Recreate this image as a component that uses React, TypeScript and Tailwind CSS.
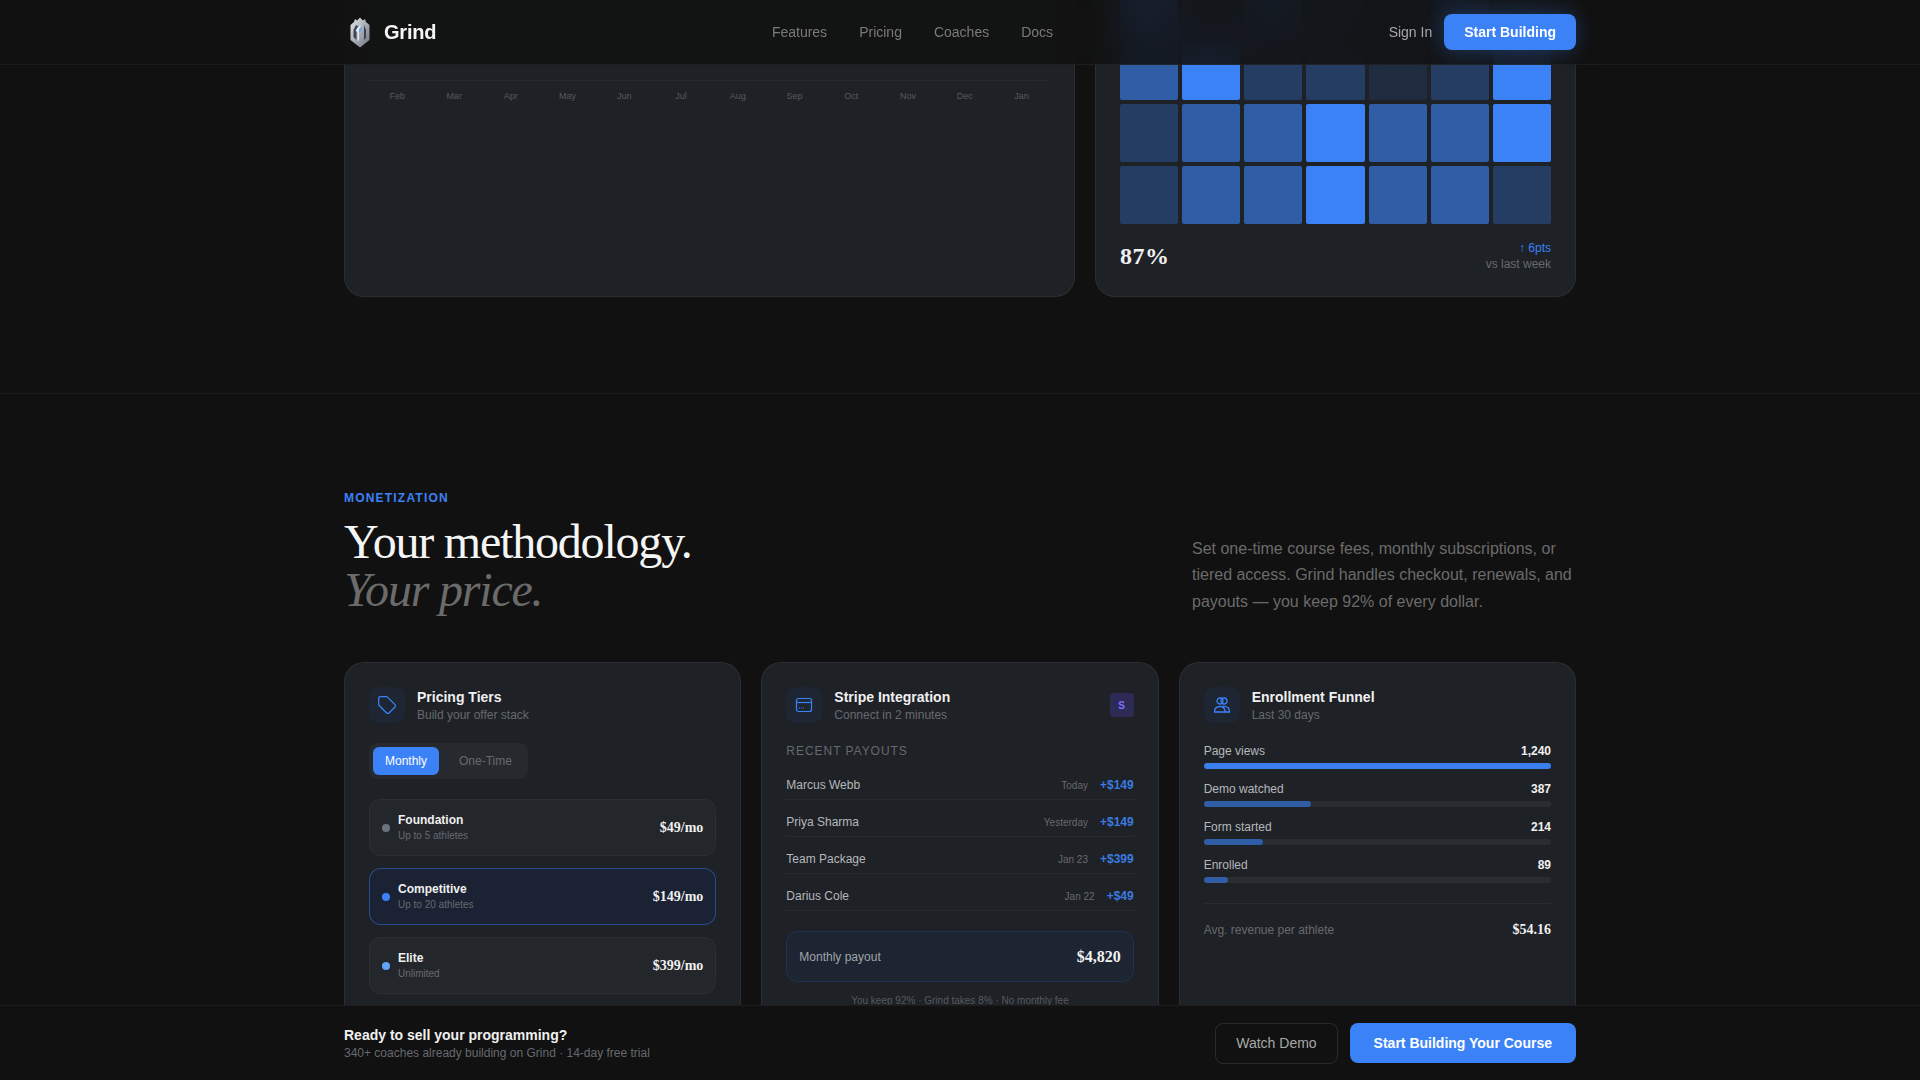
const sans = "font-['Liberation_Sans',Arial,sans-serif]";
const serif = "font-['Liberation_Serif','Times_New_Roman',serif]";

const months = ["Feb", "Mar", "Apr", "May", "Jun", "Jul", "Aug", "Sep", "Oct", "Nov", "Dec", "Jan"];

// 0 darkest .. 3 full blue
const heat = [
  [3, 1, 2, 1, 0, 2, 1],
  [2, 3, 1, 1, 0, 1, 3],
  [1, 2, 2, 3, 2, 2, 3],
  [1, 2, 2, 3, 2, 2, 1],
];
const heatColors = ["bg-[#1f2b3f]", "bg-[#263d63]", "bg-[#2f5da6]", "bg-[#3b82f6]"];

const payouts = [
  { name: "Marcus Webb", date: "Today", amount: "+$149" },
  { name: "Priya Sharma", date: "Yesterday", amount: "+$149" },
  { name: "Team Package", date: "Jan 23", amount: "+$399" },
  { name: "Darius Cole", date: "Jan 22", amount: "+$49" },
];

const funnel = [
  { label: "Page views", value: "1,240", pct: 100, color: "bg-[#3b7fee]" },
  { label: "Demo watched", value: "387", pct: 31, color: "bg-[#2f5da6]" },
  { label: "Form started", value: "214", pct: 17, color: "bg-[#2f5da6]" },
  { label: "Enrolled", value: "89", pct: 7, color: "bg-[#2f5da6]" },
];

function Logo() {
  return (
    <svg width="32" height="32" viewBox="0 0 32 32" fill="none">
      <defs>
        <linearGradient id="lg" x1="0" y1="0" x2="1" y2="1">
          <stop offset="0" stopColor="#e5e7eb" />
          <stop offset="1" stopColor="#6b7280" />
        </linearGradient>
      </defs>
      <path d="M16 1.5l3 3 2-1.5 1 3 3.5 3V24l-9.5 7.5L6.5 24V9l3.5-3 1-3 2 1.5z" fill="url(#lg)" />
      <path d="M12 9l-2.5 5v7l3 3v-8l2.5-5zM20 9l2 5v8l-2 2v-9z" fill="#3f4349" />
      <path d="M11.5 15c1-3 3-5 6-6-1.5 2-2.5 4-2.5 7v9l-1.5-1v-8z" fill="#dbeafe" />
      <path d="M15 14c.5-1.500 1.500-2.500 3-3-.8 1.200-1.300 2.600-1.300 4.500l-1.700.5z" fill="#60a5fa" />
    </svg>
  );
}

function IconBox({ children }: { children: React.ReactNode }) {
  return (
    <div className="flex h-9 w-9 shrink-0 items-center justify-center rounded-[10px] bg-[#1e2a3d]/60">
      {children}
    </div>
  );
}

function TagIcon() {
  return (
    <svg width="20" height="20" viewBox="0 0 24 24" fill="none" stroke="#3b82f6" strokeWidth="1.500">
      <path d="M12.586 2.586A2 2 0 0 0 11.172 2H4a2 2 0 0 0-2 2v7.172a2 2 0 0 0 .586 1.414l8.704 8.704a2.426 2.426 0 0 0 3.420 0l6.580-6.580a2.426 2.426 0 0 0 0-3.420z" />
    </svg>
  );
}

function CardIcon() {
  return (
    <svg width="18" height="18" viewBox="0 0 18 18" fill="none" stroke="#3b82f6" strokeWidth="1.200">
      <rect x="1.500" y="2.500" width="15" height="13" rx="2" />
      <path d="M1.500 6.500h15" />
      <path d="M4 12h2.500M8 12h1.500" strokeDasharray="1 .8" />
    </svg>
  );
}

function PeopleIcon() {
  return (
    <svg width="18" height="18" viewBox="0 0 18 18" fill="none" stroke="#3b82f6" strokeWidth="1.300">
      <circle cx="7" cy="5" r="3" />
      <circle cx="11" cy="5" r="3" />
      <path d="M1.500 16c0-3 1.500-5.500 5.500-5.500S12 13 12 16z" />
      <path d="M9.500 10.500c.5-.1 1-.1 1.500-.1 4 0 5.500 2.600 5.500 5.600H12" />
    </svg>
  );
}

function CardHead({ icon, title, sub, right }: { icon: React.ReactNode; title: string; sub: string; right?: React.ReactNode }) {
  return (
    <div className="flex items-center gap-3">
      <IconBox>{icon}</IconBox>
      <div className="min-w-0 flex-1">
        <p className="text-[14px] font-semibold leading-[20px] text-[#f0f0f0]">{title}</p>
        <p className="text-[12px] leading-[16px] text-[#666a70]">{sub}</p>
      </div>
      {right}
    </div>
  );
}

function Tier({ name, sub, price, dot, active }: { name: string; sub: string; price: string; dot: string; active?: boolean }) {
  return (
    <div
      className={`flex h-[57px] items-center gap-2 rounded-[12px] border px-3 ${
        active ? "border-[#3b82f6]/45 bg-[#1a2233]" : "border-white/[0.04] bg-[#23262b]"
      }`}
    >
      <span className={`h-2 w-2 rounded-full ${dot}`} />
      <div className="flex-1">
        <p className="text-[12px] font-semibold leading-[16px] text-[#f0f0f0]">{name}</p>
        <p className="text-[10px] leading-[16px] text-[#666a70]">{sub}</p>
      </div>
      <span className={`${serif} text-[14px] font-bold text-[#f0f0f0]`}>{price}</span>
    </div>
  );
}

const cardClass = "rounded-[20px] border border-white/[0.06] bg-[#1e2126]";

export default function App() {
  return (
    <div className={`${sans} relative h-screen overflow-hidden bg-[#111111]`}>
      {/* page is scrolled, top of the first section is off screen */}
      <div className="mt-[-299px]">
        <section className="border-b border-white/[0.05] pb-[96px]">
          <div className="mx-auto grid w-[1232px] grid-cols-[731px_481px] gap-5">
            <div className={`${cardClass} flex h-[596px] flex-col px-6`}>
              <div className="mt-[378px] border-t border-white/[0.04] pt-[8px]">
                <div className="grid grid-cols-12">
                  {months.map((m) => (
                    <span key={m} className="text-center text-[9px] leading-[14px] text-[#565a60]">
                      {m}
                    </span>
                  ))}
                </div>
              </div>
            </div>
            <div className={`${cardClass} flex h-[596px] flex-col justify-end px-6 pb-[24px]`}>
              <div className="grid grid-cols-7 gap-1">
                {heat.flat().map((level, i) => (
                  <div key={i} className={`h-[58px] rounded-[2px] ${heatColors[level]}`} />
                ))}
              </div>
              <div className="mt-4 flex items-center justify-between">
                <span className={`${serif} text-[24px] font-bold leading-[32px] tracking-[0.02em] text-[#f0f0f0]`}>87%</span>
                <div className="text-right text-[12px] leading-[16px]">
                  <p className="text-[#3b82f6]">↑ 6pts</p>
                  <p className="text-[#666a70]">vs last week</p>
                </div>
              </div>
            </div>
          </div>
        </section>

        <section className="pt-[96px]">
          <div className="mx-auto w-[1232px]">
            <div className="mb-[47px] flex items-end justify-between">
              <div>
                <p className="mb-3 text-[12px] font-semibold leading-[16px] tracking-[0.1em] text-[#3b82f6]">MONETIZATION</p>
                <h2 className={`${serif} pb-[1px] text-[48px] font-normal leading-[48px] tracking-[-0.025em] text-[#f5f5f5]`}>
                  Your methodology.
                  <br />
                  <em className="text-[#6b6b6b]">Your price.</em>
                </h2>
              </div>
              <p className="w-[384px] text-[16px] leading-[26.4px] text-[#6b6b6b]">
                Set one-time course fees, monthly subscriptions, or tiered access. Grind handles checkout, renewals, and
                payouts — you keep 92% of every dollar.
              </p>
            </div>

            <div className="grid grid-cols-3 gap-5">
              <div className={`${cardClass} h-[420px] p-6`}>
                <CardHead icon={<TagIcon />} title="Pricing Tiers" sub="Build your offer stack" />
                <div className="mt-5 flex w-fit gap-2 rounded-[8px] bg-[#26292e] p-1">
                  <span className="rounded-[6px] bg-[#3b82f6] px-3 py-[6px] text-[12px] leading-[16px] text-white">Monthly</span>
                  <span className="px-3 py-[6px] text-[12px] leading-[16px] text-[#666a70]">One-Time</span>
                </div>
                <div className="mt-5 flex flex-col gap-3">
                  <Tier name="Foundation" sub="Up to 5 athletes" price="$49/mo" dot="bg-[#6b7280]" />
                  <Tier name="Competitive" sub="Up to 20 athletes" price="$149/mo" dot="bg-[#3b82f6]" active />
                  <Tier name="Elite" sub="Unlimited" price="$399/mo" dot="bg-[#60a5fa]" />
                </div>
              </div>

              <div className={`${cardClass} h-[420px] p-6`}>
                <CardHead
                  icon={<CardIcon />}
                  title="Stripe Integration"
                  sub="Connect in 2 minutes"
                  right={
                    <span className="flex h-6 w-6 items-center justify-center rounded-[4px] bg-[#2d2a55] text-[10px] font-bold text-[#7a73ff]">
                      S
                    </span>
                  }
                />
                <p className="mt-5 text-[12px] leading-[16px] tracking-[0.08em] text-[#666a70]">RECENT PAYOUTS</p>
                <div className="mt-3 flex flex-col gap-2">
                  {payouts.map((p) => (
                    <div key={p.name} className="flex h-[29px] items-center justify-between border-b border-white/[0.04]">
                      <span className="text-[12px] text-[#b5b8bc]">{p.name}</span>
                      <div className="flex items-center gap-3">
                        <span className="text-[10px] text-[#666a70]">{p.date}</span>
                        <span className="text-[12px] font-semibold text-[#3b7be0]">{p.amount}</span>
                      </div>
                    </div>
                  ))}
                </div>
                <div className="mt-5 flex h-[51px] items-center justify-between rounded-[12px] border border-[#3b82f6]/15 bg-[#1d2432] px-3">
                  <span className="text-[12px] text-[#a0a4aa]">Monthly payout</span>
                  <span className={`${serif} text-[16px] font-bold text-[#f0f0f0]`}>$4,820</span>
                </div>
                <p className="mt-3 text-center text-[10px] leading-[14px] text-[#565a60]">
                  You keep 92% · Grind takes 8% · No monthly fee
                </p>
              </div>

              <div className={`${cardClass} h-[420px] p-6`}>
                <CardHead icon={<PeopleIcon />} title="Enrollment Funnel" sub="Last 30 days" />
                <div className="mt-5 flex flex-col gap-3">
                  {funnel.map((f) => (
                    <div key={f.label}>
                      <div className="flex justify-between text-[12px] leading-[16px]">
                        <span className="text-[#b5b8bc]">{f.label}</span>
                        <span className="font-semibold text-[#f0f0f0]">{f.value}</span>
                      </div>
                      <div className="mt-1 h-[6px] rounded-full bg-white/[0.05]">
                        <div className={`h-full rounded-full ${f.color}`} style={{ width: `${f.pct}%` }} />
                      </div>
                    </div>
                  ))}
                </div>
                <div className="mt-5 flex items-center justify-between border-t border-white/[0.05] pt-[15px]">
                  <span className="text-[12px] text-[#666a70]">Avg. revenue per athlete</span>
                  <span className={`${serif} text-[14px] font-bold text-[#f0f0f0]`}>$54.16</span>
                </div>
              </div>
            </div>
          </div>
        </section>
      </div>

      <nav className="absolute inset-x-0 top-0 h-[65px] border-b border-white/[0.05] bg-[#111111]/[0.88] backdrop-blur-lg">
        <div className="mx-auto flex h-full w-[1232px] items-center justify-between">
          <div className="flex items-center gap-2">
            <Logo />
            <span className="text-[20px] font-semibold tracking-[-0.01em] text-[#f5f5f5]">Grind</span>
          </div>
          <div className="flex items-center gap-8 text-[14px] text-[#7a7a7a]">
            <span>Features</span>
            <span>Pricing</span>
            <span>Coaches</span>
            <span>Docs</span>
          </div>
          <div className="flex items-center gap-3">
            <span className="text-[14px] text-[#a8a8a8]">Sign In</span>
            <button className="h-9 rounded-[8px] bg-[#3b82f6] px-5 text-[14px] font-semibold text-white shadow-[0_0_20px_rgba(59,130,246,0.3)]">
              Start Building
            </button>
          </div>
        </div>
      </nav>

      <div className="absolute inset-x-0 bottom-0 h-[75px] border-t border-white/[0.05] bg-[#111111]">
        <div className="mx-auto flex h-full w-[1232px] items-center justify-between">
          <div>
            <p className="text-[14px] font-semibold leading-[20px] text-[#f0f0f0]">Ready to sell your programming?</p>
            <p className="text-[12px] leading-[16px] text-[#666a70]">340+ coaches already building on Grind · 14-day free trial</p>
          </div>
          <div className="flex items-center gap-3">
            <button className="h-[41px] rounded-[8px] border border-white/[0.1] px-5 text-[14px] text-[#a8a8a8]">Watch Demo</button>
            <button className="h-10 rounded-[8px] bg-[#3b82f6] px-6 text-[14px] font-semibold text-white">
              Start Building Your Course
            </button>
          </div>
        </div>
      </div>
    </div>
  );
}
